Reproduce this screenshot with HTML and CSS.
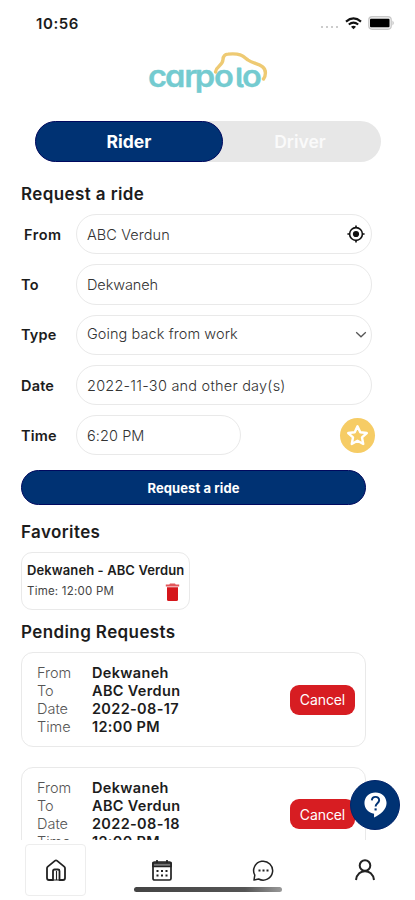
FILE: index.html
```html
<!DOCTYPE html>
<html lang="en">
<head>
<meta charset="utf-8">
<meta name="viewport" content="width=device-width, initial-scale=1">
<title>Carpolo</title>
<link rel="stylesheet" href="styles.css">
</head>
<body>
<div class="app">
  <header class="status">
    <span class="clock">10:56</span>
    <span class="dots"><i></i><i></i><i></i><i></i></span>
    <svg class="wifi" width="17" height="13" viewBox="0 0 17 13" fill="none" stroke="#111" stroke-width="2.1"><path d="M1 4.6Q8.500-1.800 16 4.600M3.800 7.500Q8.500 3.700 13.200 7.500"/><path d="M6 9.700Q8.500 7.600 11 9.700L8.500 12.300z" fill="#111" stroke="none"/></svg>
    <svg class="battery" width="27" height="14" viewBox="0 0 27 14"><rect x=".7" y=".7" width="22.600" height="12.600" rx="3.500" fill="#eee" stroke="#c9c9c9" stroke-width="1.200"/><rect x="2" y="2.800" width="19.500" height="8.400" rx="1" fill="#000"/><path d="M24.500 4.500Q27 7 24.500 9.500z" fill="#bbb"/></svg>
  </header>
  <div class="brand">
    <svg width="125" height="50" viewBox="145 48 125 50"><text class="logo" transform="translate(148 0) scale(1.09 1)" x="0 15.700 33.300 42.800 60.500 80.300 86.300" y="86.800">carpo<tspan class="ell">l</tspan>o</text><path d="M215.500 72C216 66 222.500 66.500 223 59.500Q223.300 54.300 228 54.100C240 53.200 242 55 248 60C254 64.500 265.500 64 265.400 73Q265.300 77 263.500 79" fill="none" stroke="#eeca73" stroke-width="3.400" stroke-linecap="round"/></svg>
  </div>
  <div class="toggle"><button class="seg on">Rider</button><button class="seg">Driver</button></div>

  <main class="content">
    <h2 class="h-request">Request a ride</h2>
    <div class="form">
      <div class="row"><label class="from">From</label><div class="field"><span>ABC Verdun</span>
        <svg class="target" width="18" height="18" viewBox="0 0 18 18" fill="none" stroke="#111" stroke-width="1.600"><circle cx="9" cy="9" r="6.400"/><circle cx="9" cy="9" r="3.100" fill="#111" stroke="none"/><path d="M9 .4v2.600M9 15v2.600M.4 9H3M15 9h2.600"/></svg></div></div>
      <div class="row"><label>To</label><div class="field to"><span>Dekwaneh</span></div></div>
      <div class="row"><label>Type</label><div class="field select"><span>Going back from work</span>
        <svg class="chevron" width="12" height="8" viewBox="0 0 12 8" fill="none" stroke="#555" stroke-width="1.300"><path d="M1.200 1.300L6 5.800l4.800-4.500"/></svg></div></div>
      <div class="row"><label>Date</label><div class="field date"><span>2022-11-30 and other day(s)</span></div></div>
      <div class="row"><label>Time</label><div class="field short"><span>6:20 PM</span></div>
        <button class="star" aria-label="Add favorite"><svg width="23" height="23" viewBox="0 0 24 24" fill="none" stroke="#fff" stroke-width="2.500" stroke-linejoin="round"><path d="M12 2.400l2.900 6.200 6.800.8-5 4.600 1.300 6.800-6-3.400-6 3.400 1.300-6.800-5-4.600 6.800-.8z"/></svg></button></div>
    </div>
    <button class="submit">Request a ride</button>
    <h2 class="h-fav">Favorites</h2>
    <section class="favorite">
      <strong>Dekwaneh - ABC Verdun</strong>
      <div class="fav-line"><span>Time: 12:00 PM</span>
        <svg width="15" height="19" viewBox="0 0 15 19"><path d="M2 4.200h11v12.300Q13 18 11.500 18h-8Q2 18 2 16.500z" fill="#d5161b"/><path d="M.8 3.400V1.400h3.500L5 .6h5l.7.800h3.500v2z" fill="#e2565a"/></svg></div>
    </section>
    <h2 class="h-pending">Pending Requests</h2>
    <section class="request">
      <dl><dt>From</dt><dd>Dekwaneh</dd><dt>To</dt><dd>ABC Verdun</dd><dt>Date</dt><dd>2022-08-17</dd><dt>Time</dt><dd>12:00 PM</dd></dl>
      <button class="cancel">Cancel</button>
    </section>
    <section class="request">
      <dl><dt>From</dt><dd>Dekwaneh</dd><dt>To</dt><dd>ABC Verdun</dd><dt>Date</dt><dd>2022-08-18</dd><dt>Time</dt><dd>12:00 PM</dd></dl>
      <button class="cancel">Cancel</button>
    </section>
  </main>

  <nav class="tabs">
    <a class="tab active"><svg width="22" height="23" viewBox="0 0 22 23" fill="none" stroke="#222" stroke-width="1.800" stroke-linejoin="round"><path d="M2 9.300Q2 8.300 2.800 7.600L9.800 1.900Q11 1 12.200 1.900L19.200 7.600Q20 8.300 20 9.300V19Q20 21 18 21H14.500V12Q14.500 10.500 13 10.500H9.500Q8 10.500 8 12V21H4Q2 21 2 19z"/><path d="M8 21H14.500M11.500 12v9" stroke-width="1.100"/></svg></a>
    <a class="tab"><svg width="22" height="23" viewBox="0 0 22 23" fill="none" stroke="#222" stroke-width="1.700"><rect x="2" y="3" width="18" height="18" rx="1.500"/><path d="M2 4h18v3.500H2z" fill="#777"/><path d="M6 1v3M16 1v3"/><path d="M5.500 12h2M10 12h2M14.500 12h2M5.500 16.500h2M10 16.500h2M14.500 16.500h2" stroke-width="2"/></svg></a>
    <a class="tab"><svg width="23" height="23" viewBox="0 0 23 23" fill="none" stroke="#222" stroke-width="1.500"><path d="M2.800 16.200A9.500 9.500 0 1 1 6.600 20L2 21z" stroke-linejoin="round"/><path d="M6.500 11.500h2M10.500 11.500h2M14.500 11.500h2" stroke-width="2"/></svg></a>
    <a class="tab last"><svg width="22" height="23" viewBox="0 0 22 23" fill="none" stroke="#222" stroke-width="2"><circle cx="11" cy="6.500" r="5.300"/><path d="M2 21C3.500 9.200 18.500 9.200 20 21"/></svg></a>
  </nav>
  <button class="help" aria-label="Help"><svg width="25" height="28" viewBox="0 0 26 28"><path d="M13 1C6.300 1 1.500 5.800 1.500 12c0 6 4.500 10.500 10 11v4C18.500 24 24.500 18.300 24.500 12 24.500 5.800 19.700 1 13 1z" fill="#fff"/><path d="M9.200 9.200C9.500 4.200 17 4.500 16.800 9.200c-.1 3-3.600 3-3.700 6.300" fill="none" stroke="#003273" stroke-width="2"/><rect x="12" y="17.500" width="2.200" height="2.200" fill="#003273"/></svg></button>
  <div class="home-bar"></div>
</div>
</body>
</html>
```
FILE: styles.css
```css
* { box-sizing: border-box; }
body { margin: 0; background: #fff; font-family: Inter, "Liberation Sans", sans-serif; color: #1c1c1c; }
button { border: 0; padding: 0; font-family: inherit; display: flex; align-items: center; justify-content: center; }
svg { display: block; flex: none; }
.app { position: relative; width: 415px; height: 900px; overflow: hidden; display: flex; flex-direction: column; }

.status { height: 46px; flex: none; display: flex; align-items: center; padding: 0 20px 0 36px; }
.clock { flex: 1; font-size: 15px; font-weight: 600; letter-spacing: .6px; }
.dots { display: flex; gap: 2.500px; margin: 8px 7px 0 0; }
.dots i { width: 2.500px; height: 2.500px; border-radius: 50%; background: #bbb; }
.wifi { margin-right: 6px; }

.brand { height: 75px; flex: none; padding: 2px 0 0 145px; }
.logo { font-family: Inter, sans-serif; font-size: 30px; font-weight: 600; font-feature-settings: "cv11", "cv05"; fill: #74cbd0; stroke: #74cbd0; stroke-width: .3px; stroke-linejoin: round; }
.ell { font-size: 25px; stroke-width: .8px; }

.toggle { flex: none; display: flex; width: 346px; height: 41px; margin-left: 35px; border-radius: 21px; background: #e7e7e7; }
.seg { width: 158px; background: none; color: #fafafa; font-size: 17.500px; font-weight: 600; padding-right: 4px; }
.seg.on { width: 188px; padding: 0; border-radius: 21px; background: #003273; border: 1px solid #00095f; color: #fff; font-weight: 700; }

.content { flex: 1; min-height: 0; overflow: hidden; padding: 19px 0 0 21px; }
h2 { margin: 0; height: 26px; line-height: 26px; font-size: 17px; font-weight: 600; letter-spacing: .4px; white-space: nowrap; }
.form { margin-top: 7px; display: flex; flex-direction: column; gap: 10px; }
.row { display: flex; align-items: center; height: 40.300px; }
label { width: 55px; flex: none; font-size: 14.500px; font-weight: 600; letter-spacing: .2px; }
label.from { padding-left: 3px; letter-spacing: .5px; }
.field { width: 296px; height: 40.300px; border: 1px solid #e9e9e9; border-radius: 20px; display: flex; align-items: center; justify-content: space-between; padding: 0 6px 0 10px; font-size: 14.500px; font-weight: 300; letter-spacing: .08px; color: #333; white-space: nowrap; }
.field.to { letter-spacing: -.1px; }
.field.date { letter-spacing: .23px; }
.field.short { width: 165px; }
.field.select span { margin-top: -2px; }
.field.select { padding-right: 4px; }
.star { width: 35px; height: 35px; margin-left: 99px; border-radius: 50%; background: #f6cc65; }
.submit { width: 345px; height: 35px; margin-top: 15px; border-radius: 18px; background: #003273; border: 1px solid #00095f; color: #fff; font-size: 13px; font-weight: 700; letter-spacing: .1px; }
.h-fav { margin-top: 14px; }
.favorite { width: 169px; height: 58px; margin-top: 7px; padding: 9px 4px 0 5px; border: 1px solid #e9e9e9; border-radius: 11px; white-space: nowrap; }
.favorite strong { display: block; font-size: 13px; line-height: 16px; font-weight: 600; letter-spacing: .1px; }
.fav-line { display: flex; justify-content: space-between; padding-right: 5px; font-size: 11.500px; line-height: 26px; letter-spacing: .22px; color: #444; font-weight: 400; }
.fav-line svg { margin-top: 5px; }
.h-pending { margin-top: 9px; }
.request { width: 345px; height: 94.500px; margin: 7px 0 20px; padding: 0 10px 0 15px; border: 1px solid #e9e9e9; border-radius: 12px; display: flex; align-items: center; justify-content: space-between; }
.request + .request { margin-top: 0; }
.request + .request dl { padding-top: 1px; }
dl { margin: 0; display: grid; grid-template-columns: 55px auto; font-size: 14.500px; line-height: 18px; }
dt { color: #555; font-weight: 300; }
dd { margin: 0; font-weight: 600; letter-spacing: .34px; white-space: nowrap; }
.cancel { width: 65px; height: 30px; border-radius: 9px; background: #d71d22; color: #fff; font-size: 14px; font-weight: 400; letter-spacing: -.1px; }

.tabs { height: 60px; flex: none; background: #fff; display: flex; align-items: flex-start; padding: 4px 0 0 25px; }
.tab { width: 61px; height: 52px; display: flex; align-items: center; justify-content: center; }
.tab + .tab { margin-left: 41px; }
.tab.active { border: 1px solid #ededed; border-radius: 4px; }
.tab.active + .tab { margin-left: 45px; }
.tab + .tab.last { margin-left: 40px; }
.help { position: absolute; left: 350px; top: 780px; width: 50px; height: 50px; border-radius: 50%; background: #003273; border: 1px solid #00246b; }
.home-bar { position: absolute; left: 134px; top: 887px; width: 148px; height: 5px; border-radius: 3px; background: linear-gradient(90deg, #444, #555 75%, #999); }
```
